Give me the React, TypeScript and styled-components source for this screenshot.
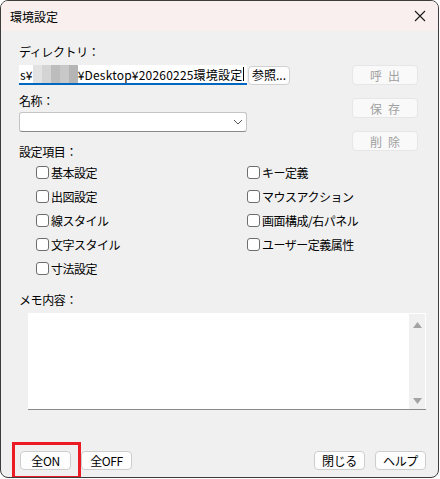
import React from 'react';
import styled, { createGlobalStyle } from 'styled-components';

const GlobalStyle = createGlobalStyle`
  html, body {
    margin: 0;
    padding: 0;
    background: #ffffff;
  }
  * {
    box-sizing: border-box;
  }
`;

const FONT = `"Noto Sans CJK JP", "Noto Sans", sans-serif`;

const Window = styled.div`
  width: 439px;
  height: 478px;
  border: 1px solid #3c3c3c;
  border-radius: 8px;
  overflow: hidden;
  background: #f0f0f0;
  font-family: ${FONT};
  font-size: 12px;
  color: #000;
  display: flex;
  flex-direction: column;
  position: relative;
`;

const TitleBar = styled.div`
  height: 30px;
  flex: none;
  background: #f8efee;
  display: flex;
  align-items: center;
  justify-content: space-between;
  padding: 0 8px 0 9px;
  font-size: 12px;
`;

const CloseButton = styled.div`
  width: 20px;
  height: 20px;
  display: flex;
  align-items: center;
  justify-content: center;
`;

const Body = styled.div`
  flex: 1;
  display: flex;
  flex-direction: column;
  padding: 13px 12px 7px 18px;
`;

const TopArea = styled.div`
  display: flex;
  justify-content: space-between;
  align-items: flex-start;
`;

const LeftColumn = styled.div`
  display: flex;
  flex-direction: column;
`;

const RightColumn = styled.div`
  display: flex;
  flex-direction: column;
  gap: 13px;
  padding-top: 21px;
  padding-right: 8px;
`;

const Label = styled.div<{ $top?: number }>`
  line-height: 16px;
  height: 16px;
  margin-top: ${(p) => p.$top ?? 0}px;
  white-space: nowrap;
  letter-spacing: -0.4px;
`;

const InputRow = styled.div`
  display: flex;
  align-items: center;
  gap: 1px;
  margin-top: 5px;
`;

const PathInput = styled.div`
  width: 228px;
  height: 20px;
  background: #ffffff;
  border-bottom: 2px solid #0067c0;
  display: flex;
  align-items: center;
  overflow: hidden;
  white-space: nowrap;
  padding-left: 1px;
  position: relative;
  letter-spacing: 0.2px;
`;

const Mosaic = styled.span`
  display: inline-flex;
  height: 18px;
  flex: none;
`;

const MosaicCell = styled.span<{ $shade: string }>`
  width: 9px;
  height: 18px;
  background: ${(p) => p.$shade};
`;

const MosaicLine = styled.span`
  position: absolute;
  left: 14px;
  width: 45px;
  bottom: -2px;
  height: 2px;
  background: #a5c5e8;
`;

const Caret = styled.span`
  display: inline-block;
  width: 1px;
  height: 14px;
  background: #000;
  margin-left: 1px;
`;

const SmallButton = styled.button`
  height: 19px;
  padding: 0 3px;
  border: 1px solid #d0d0d0;
  border-radius: 4px;
  background: #fdfdfd;
  font-family: ${FONT};
  font-size: 12px;
  line-height: 16px;
  color: #000;
  white-space: nowrap;
`;

const Combo = styled.div`
  width: 228px;
  height: 20px;
  margin-top: 3px;
  background: #ffffff;
  border: 1px solid #c4c4c4;
  border-bottom-color: #8a8a8a;
  border-radius: 3px;
  display: flex;
  align-items: center;
  justify-content: flex-end;
  padding-right: 3px;
`;

const SideButton = styled.button`
  width: 66px;
  height: 20px;
  border: 1px solid #e6e6e6;
  border-radius: 4px;
  background: #f9f9f9;
  color: #a0a0a0;
  font-family: ${FONT};
  font-size: 12px;
  letter-spacing: 6px;
  text-indent: 6px;
  padding: 0;
`;

const CheckGrid = styled.div`
  display: grid;
  grid-template-columns: 211px 1fr;
  grid-auto-flow: column;
  grid-template-rows: repeat(5, 24px);
  padding-left: 17px;
`;

const CheckItem = styled.label`
  display: flex;
  align-items: center;
  gap: 2px;
  white-space: nowrap;
  letter-spacing: -0.5px;
`;

const Box = styled.span`
  width: 13px;
  height: 13px;
  border: 1px solid #6e6e6e;
  border-radius: 3px;
  background: #ffffff;
  flex: none;
`;

const Memo = styled.div`
  margin: 5px 0 0 9px;
  width: 398px;
  height: 97px;
  background: #ffffff;
  border-bottom: 1px solid #8a8a8a;
  display: flex;
  justify-content: flex-end;
  padding: 1px 1px 0 0;
`;

const ScrollTrack = styled.div`
  width: 16px;
  background: #f0f0f0;
  display: flex;
  flex-direction: column;
  justify-content: space-between;
  align-items: center;
  padding: 8px 0 5px;
`;

const Footer = styled.div`
  margin-top: auto;
  display: flex;
  justify-content: space-between;
  padding: 0 0 0 1px;
`;

const ButtonGroup = styled.div`
  display: flex;
  gap: 10px;
`;

const FooterButton = styled.button`
  width: 51px;
  height: 19px;
  padding: 0;
  border: 1px solid #cdcdcd;
  border-radius: 4px;
  background: #fdfdfd;
  font-family: ${FONT};
  font-size: 12px;
  line-height: 16px;
  color: #000;
  letter-spacing: -0.4px;
`;

const Highlight = styled.div`
  position: absolute;
  left: 11px;
  top: 441px;
  width: 69px;
  height: 37px;
  border: 3px solid #ec1c24;
  pointer-events: none;
`;

const leftItems = ['基本設定', '出図設定', '線スタイル', '文字スタイル', '寸法設定'];
const rightItems = ['キー定義', 'マウスアクション', '画面構成/右パネル', 'ユーザー定義属性'];
const shades = ['#e2e2e2', '#d4d4d4', '#bdbdbd', '#c8c8c8', '#b5b5b5'];

const Check = ({ label }: { label: string }) => (
  <CheckItem>
    <Box />
    {label}
  </CheckItem>
);

export default function App() {
  return (
    <>
      <GlobalStyle />
      <Window>
        <TitleBar>
          <span>環境設定</span>
          <CloseButton>
            <svg width="12" height="12" viewBox="0 0 12 12">
              <path d="M1 1 L11 11 M11 1 L1 11" stroke="#1a1a1a" strokeWidth="1.1" />
            </svg>
          </CloseButton>
        </TitleBar>
        <Body>
          <TopArea>
            <LeftColumn>
              <Label>ディレクトリ：</Label>
              <InputRow>
                <PathInput>
                  s¥
                  <Mosaic>
                    {shades.map((s, i) => (
                      <MosaicCell key={i} $shade={s} />
                    ))}
                  </Mosaic>
                  ¥Desktop¥20260225環境設定
                  <Caret />
                  <MosaicLine />
                </PathInput>
                <SmallButton>参照...</SmallButton>
              </InputRow>
              <Label $top={8}>名称：</Label>
              <Combo>
                <svg width="10" height="6" viewBox="0 0 10 6">
                  <path d="M1 1 L5 5 L9 1" stroke="#555" strokeWidth="1" fill="none" />
                </svg>
              </Combo>
              <Label $top={12}>設定項目：</Label>
            </LeftColumn>
            <RightColumn>
              <SideButton disabled>呼出</SideButton>
              <SideButton disabled>保存</SideButton>
              <SideButton disabled>削除</SideButton>
            </RightColumn>
          </TopArea>
          <CheckGrid>
            {leftItems.map((l) => (
              <Check key={l} label={l} />
            ))}
            {rightItems.map((l) => (
              <Check key={l} label={l} />
            ))}
          </CheckGrid>
          <Label $top={12}>メモ内容：</Label>
          <Memo>
            <ScrollTrack>
              <svg width="9" height="6" viewBox="0 0 9 6">
                <path d="M4.5 0 L9 6 L0 6 Z" fill="#a3a3a3" />
              </svg>
              <svg width="9" height="6" viewBox="0 0 9 6">
                <path d="M0 0 L9 0 L4.5 6 Z" fill="#a3a3a3" />
              </svg>
            </ScrollTrack>
          </Memo>
          <Footer>
            <ButtonGroup>
              <FooterButton>全ON</FooterButton>
              <FooterButton>全OFF</FooterButton>
            </ButtonGroup>
            <ButtonGroup>
              <FooterButton>閉じる</FooterButton>
              <FooterButton>ヘルプ</FooterButton>
            </ButtonGroup>
          </Footer>
        </Body>
        <Highlight />
      </Window>
    </>
  );
}
